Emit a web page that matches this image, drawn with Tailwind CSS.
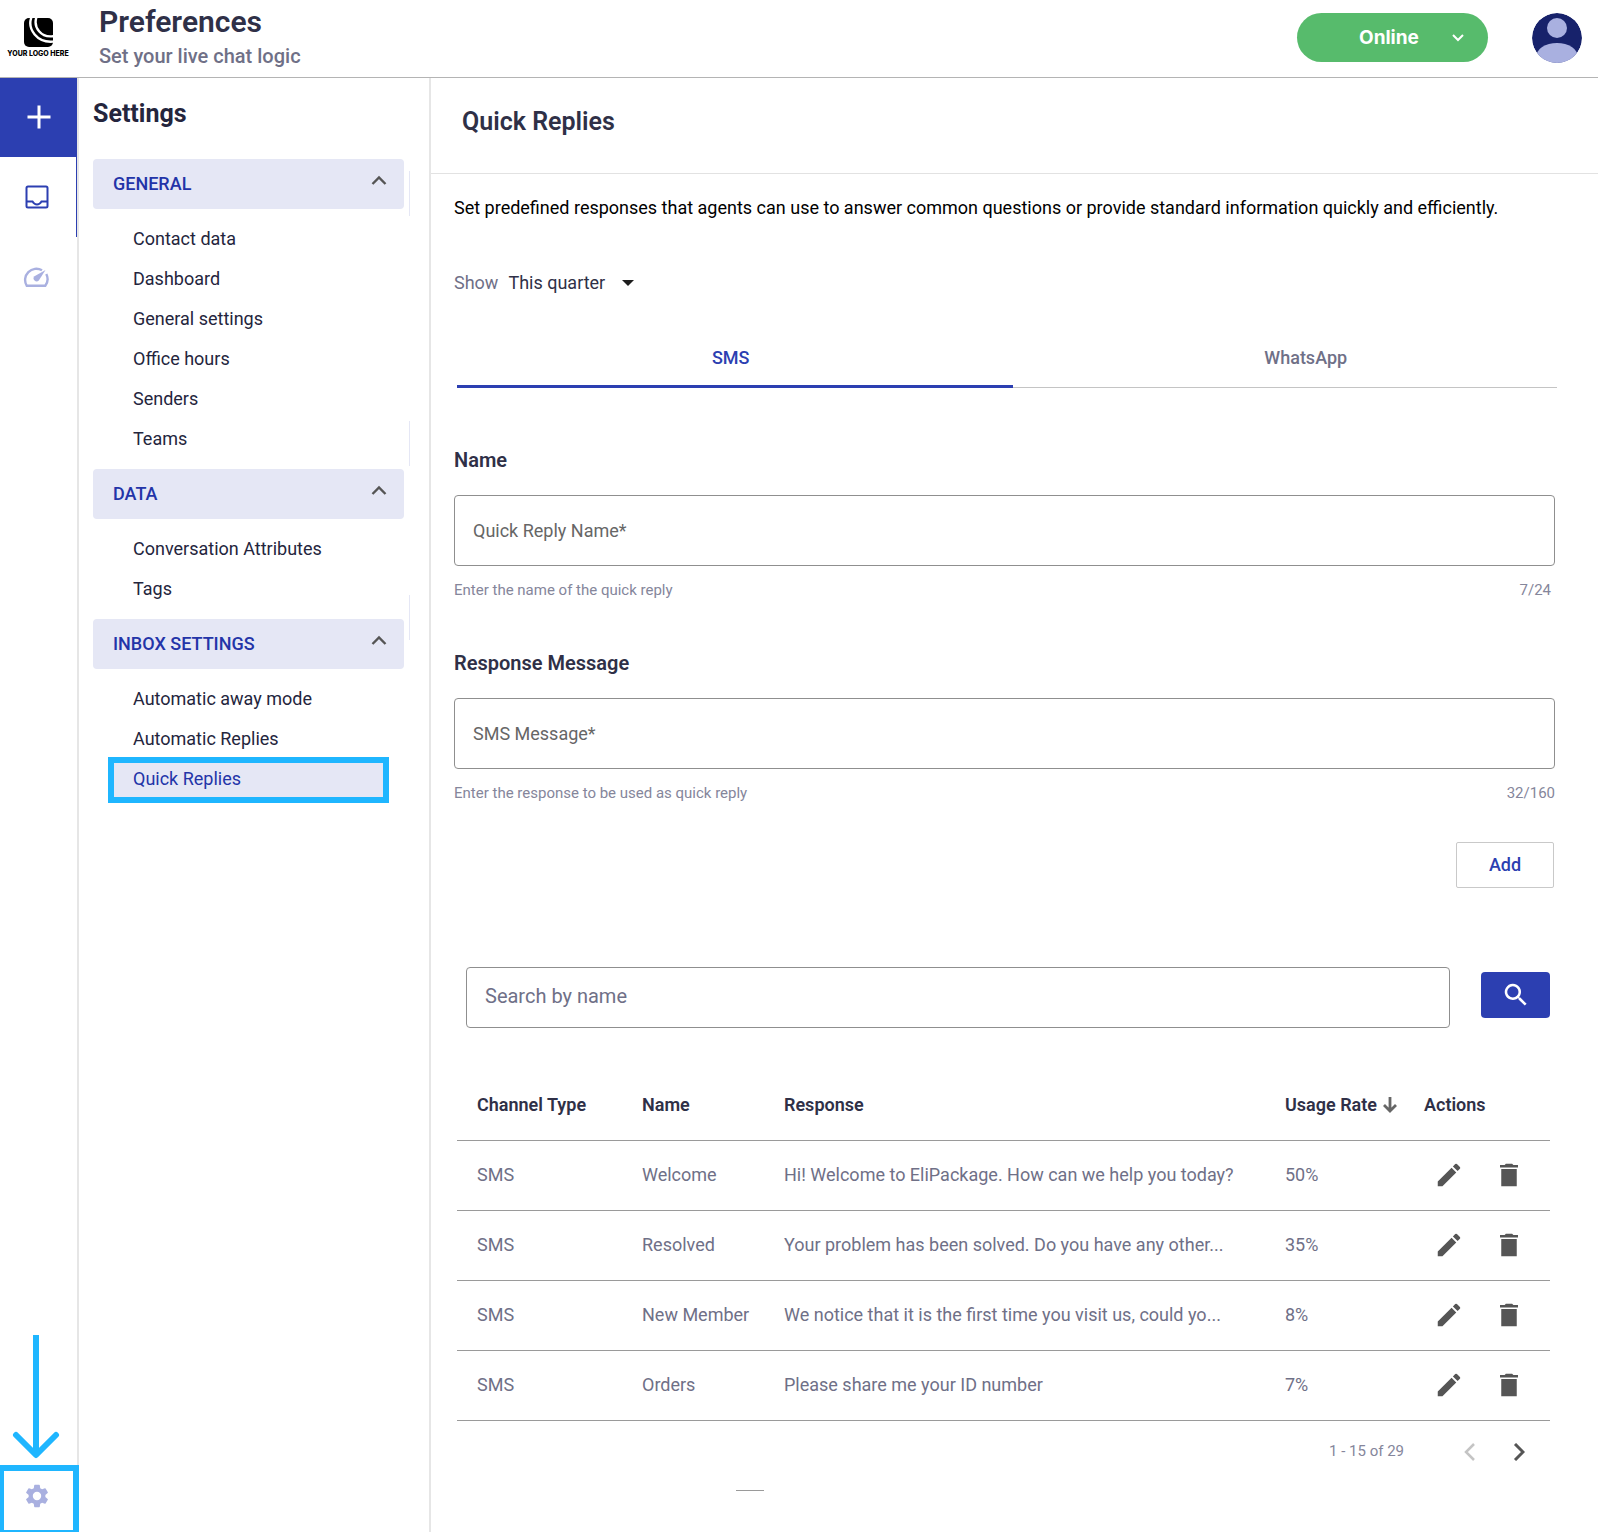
<!DOCTYPE html>
<html lang="en">
<head>
    <meta charset="UTF-8">
    <meta name="viewport" content="width=device-width, initial-scale=1.0">
    <title>Preferences - Quick Replies</title>
    <script src="https://cdn.jsdelivr.net/npm/@tailwindcss/browser@4"></script>
</head>
<body class="min-h-screen flex flex-col bg-white text-[#2f3047] font-[Roboto,sans-serif]">
    <!-- shared icons -->
    <svg class="hidden" aria-hidden="true">
        <symbol id="icon-up" viewBox="0 0 24 24"><path fill="none" stroke="currentColor" stroke-width="2.400" d="M5.500 15l6.500-6.500 6.500 6.500"/></symbol>
        <symbol id="icon-edit" viewBox="0 0 24 24"><path fill="currentColor" d="M3 17.25V21h3.75L17.81 9.94l-3.75-3.75L3 17.25zM20.71 7.04a1 1 0 0 0 0-1.41l-2.34-2.34a1 1 0 0 0-1.41 0l-1.83 1.83 3.75 3.75 1.83-1.83z"/></symbol>
        <symbol id="icon-delete" viewBox="0 0 24 24"><path fill="currentColor" d="M5.800 7.200h12.400V21H5.800zM19.200 4v2H4.800V4h3.700l1-1h5l1 1z"/></symbol>
    </svg>

    <header class="h-[78px] pb-0.5 flex items-center border-b border-[#b4b4b4]">
        <a href="#" class="w-[76px] flex flex-col items-center gap-1" aria-label="Home">
            <svg class="w-[29px] h-[29px]" viewBox="0 0 29 29">
                <rect width="29" height="29" rx="5"/>
                <g fill="none" stroke="#fff" stroke-width="2.400">
                    <path d="M7.500 -1C3 11 13 25.500 30 23.500"/>
                    <path d="M12.500 -1C9 9 17 20.500 30 18"/>
                </g>
            </svg>
            <span class="text-[7px] leading-[6px] font-extrabold text-black whitespace-nowrap font-[Inter,sans-serif]">YOUR LOGO HERE</span>
        </a>
        <div class="flex-grow pl-[23px]">
            <h1 class="text-[30px] leading-9 font-semibold">Preferences</h1>
            <p class="text-[20px] leading-8 font-medium text-[#6f7087]">Set your live chat logic</p>
        </div>
        <div class="relative mr-11">
            <select aria-label="Status" class="appearance-none w-[191px] h-[49px] pt-0.5 pl-[62px] rounded-full bg-[#57bb6c] text-white text-[19px] font-bold font-[Inter,sans-serif]">
                <option>Online</option>
            </select>
            <svg class="absolute right-6 top-[17px] w-3 h-4 text-white pointer-events-none" viewBox="0 0 12 16"><path d="M1 5l5 5 5-5" fill="none" stroke="currentColor" stroke-width="2"/></svg>
        </div>
        <button class="mr-4" aria-label="Account">
            <svg class="w-[50px] h-[50px] rounded-full" viewBox="0 0 50 50">
                <circle cx="25" cy="25" r="25" fill="#17226b"/>
                <circle cx="25" cy="15" r="10" fill="#a9b0e0"/>
                <ellipse cx="25" cy="44" rx="21" ry="14" fill="#a9b0e0"/>
            </svg>
        </button>
    </header>

    <div class="flex-grow flex overflow-hidden">
        <nav class="w-[79px] shrink-0 flex flex-col border-r-2 border-[#e6e6e6]" aria-label="Main">
            <button class="h-[79px] pb-0.5 flex items-center justify-center bg-[#2c3fb1] text-white" aria-label="New">
                <svg class="w-6 h-6" viewBox="0 0 24 24"><path d="M12 .5v23M.5 12h23" stroke="currentColor" stroke-width="3"/></svg>
            </button>
            <a href="#" class="h-20 flex items-center justify-center border-r border-[#2c3fb1] pr-0.5 text-[#2c3fb1]" aria-label="Inbox">
                <svg class="w-6 h-6" viewBox="0 0 24 24" fill="none" stroke="currentColor" stroke-width="2">
                    <rect x="1.500" y="1.500" width="21" height="21" rx="1.500"/>
                    <path d="M2 16.500h5.500c1.200 2 2.600 3 4.500 3s3.300-1 4.500-3H22"/>
                </svg>
            </a>
            <a href="#" class="h-20 flex items-center justify-center pr-1.5 text-[#a9b0e0]" aria-label="Dashboard">
                <svg class="w-[26px] h-[22px]" viewBox="0 0 26 22">
                    <path d="M19 4.300A11.200 11.200 0 0 0 3.700 19.700H22.300A11.200 11.200 0 0 0 23.300 8" fill="none" stroke="currentColor" stroke-width="2.400"/>
                    <path d="M22.500 4L15.800 14.500a3 3 0 1 1-4.300-4.200z" fill="currentColor"/>
                </svg>
            </a>
            <div class="mt-auto flex justify-center pr-1.5 pb-1.5 text-[#1fb6ff]">
                <svg class="w-[48px] h-[124px]" viewBox="0 0 48 124" fill="none" stroke="currentColor" stroke-width="6">
                    <path d="M24 0v118"/>
                    <path d="M4 100l20 20 20-20" stroke-linecap="round" stroke-linejoin="round"/>
                </svg>
            </div>
            <a href="#" class="h-[71px] -ml-0.5 -mr-0.5 -mb-1 flex items-center justify-center border-[6px] border-[#1fb6ff] pr-1 pb-2.5 text-[#a9b0e0]" aria-label="Settings">
                <svg class="w-7 h-7" viewBox="0 0 24 24"><path fill="currentColor" d="M19.140 12.940c.040-.300.060-.610.060-.940s-.020-.640-.070-.940l2.030-1.580a.490.490 0 0 0 .120-.610l-1.920-3.320a.490.490 0 0 0-.590-.220l-2.390.960a7 7 0 0 0-1.620-.940l-.360-2.540a.480.480 0 0 0-.480-.410h-3.840a.470.470 0 0 0-.470.410l-.360 2.540c-.590.240-1.130.570-1.620.940l-2.390-.960a.480.480 0 0 0-.590.220L2.740 8.870a.470.470 0 0 0 .120.610l2.030 1.580c-.050.300-.090.630-.090.940s.020.640.070.940l-2.030 1.580a.490.490 0 0 0-.120.610l1.920 3.320c.120.220.370.290.590.220l2.390-.960c.500.380 1.030.700 1.620.940l.360 2.540c.050.240.240.410.480.410h3.840c.240 0 .440-.170.470-.410l.360-2.540a7 7 0 0 0 1.620-.940l2.390.960c.220.080.470 0 .590-.220l1.920-3.320a.470.470 0 0 0-.120-.610zM12 15.600a3.600 3.600 0 1 1 0-7.200 3.600 3.600 0 0 1 0 7.200z"/></svg>
            </a>
        </nav>

        <aside class="w-[352px] shrink-0 pl-[14px] pr-[25px] border-r-2 border-[#e6e6e6]">
            <h2 class="pt-[18px] pb-[27px] text-[25px] leading-9 font-bold text-[#24253d]">Settings</h2>
            <section class="relative">
                <button class="w-full h-[50px] flex items-center justify-between pl-5 pr-[13px] rounded bg-[#e5e7f5] text-[#2334a8] text-lg font-medium">
                    GENERAL
                    <svg class="w-6 h-6 mb-1.5 text-[#555]"><use href="#icon-up"/></svg>
                </button>
                <span class="absolute -right-1.5 top-3 w-px h-[45px] bg-[#e5e7f5]"></span>
                <ul class="py-2.5 pl-10 text-lg leading-10 text-[#24253d]">
                    <li><a href="#">Contact data</a></li>
                    <li><a href="#">Dashboard</a></li>
                    <li><a href="#">General settings</a></li>
                    <li><a href="#">Office hours</a></li>
                    <li><a href="#">Senders</a></li>
                    <li><a href="#">Teams</a></li>
                </ul>
            </section>
            <section class="relative">
                <button class="w-full h-[50px] flex items-center justify-between pl-5 pr-[13px] rounded bg-[#e5e7f5] text-[#2334a8] text-lg font-medium">
                    DATA
                    <svg class="w-6 h-6 mb-1.5 text-[#555]"><use href="#icon-up"/></svg>
                </button>
                <span class="absolute -right-1.5 -top-12 w-px h-[45px] bg-[#e5e7f5]"></span>
                <ul class="py-2.5 pl-10 text-lg leading-10 text-[#24253d]">
                    <li><a href="#">Conversation Attributes</a></li>
                    <li><a href="#">Tags</a></li>
                </ul>
            </section>
            <section class="relative">
                <button class="w-full h-[50px] flex items-center justify-between pl-5 pr-[13px] rounded bg-[#e5e7f5] text-[#2334a8] text-lg font-medium">
                    INBOX SETTINGS
                    <svg class="w-6 h-6 mb-1.5 text-[#555]"><use href="#icon-up"/></svg>
                </button>
                <span class="absolute -right-1.5 -top-6 w-px h-[45px] bg-[#e5e7f5]"></span>
                <ul class="pt-2.5 pl-10 text-lg leading-10 text-[#24253d]">
                    <li><a href="#">Automatic away mode</a></li>
                    <li><a href="#">Automatic Replies</a></li>
                </ul>
                <a href="#" class="block -mt-0.5 mx-[15px] pl-[19px] h-[46px] border-[6px] border-[#1fb6ff] bg-[#e5e7f5] text-lg leading-8 text-[#2334a8]" aria-current="page">Quick Replies</a>
            </section>
        </aside>

        <main class="flex-grow min-w-0">
            <h2 class="h-[96px] pl-[31px] pt-6 text-[25px] leading-10 font-semibold border-b border-[#e2e2e2]">Quick Replies</h2>
            <div class="pl-[23px] pr-[43px] pt-5">
                <p class="text-lg text-black">Set predefined responses that agents can use to answer common questions or provide standard information quickly and efficiently.</p>

                <div class="mt-[47px] flex items-center gap-2.5 text-lg">
                    <label for="period" class="text-[#6f7087]">Show</label>
                    <div class="relative">
                        <select id="period" class="appearance-none w-32">
                            <option>This quarter</option>
                        </select>
                        <svg class="absolute right-0.5 top-[11px] w-3 h-1.5 pointer-events-none" viewBox="0 0 12 6"><path d="M0 0h12L6 6z" fill="#1d1d1d"/></svg>
                    </div>
                </div>

                <div class="mt-[33px] ml-[3px] -mr-0.5 flex border-b border-[#c4c4c4] text-lg font-medium" role="tablist">
                    <button role="tab" aria-selected="true" class="w-[50.5%] h-[58px] -mb-px pr-2 border-b-3 border-[#2c3fb1] text-[#2c3fb1]">SMS</button>
                    <button role="tab" aria-selected="false" class="flex-grow pl-[42px] pb-0.5 text-[#6f7087]">WhatsApp</button>
                </div>

                <div class="mt-14">
                    <label for="name" class="block text-[20px] leading-8 font-semibold">Name</label>
                    <input id="name" type="text" placeholder="Quick Reply Name*" class="mt-[19px] w-full h-[71px] px-[18px] border border-[#8f8f8f] rounded text-lg placeholder:text-[#666]">
                    <div class="mt-3 pr-1 flex justify-between text-[15px] leading-6 text-[#85869b]">
                        <span>Enter the name of the quick reply</span>
                        <span>7/24</span>
                    </div>
                </div>

                <div class="mt-[45px]">
                    <label for="message" class="block text-[20px] leading-8 font-semibold">Response Message</label>
                    <input id="message" type="text" placeholder="SMS Message*" class="mt-[19px] w-full h-[71px] px-[18px] border border-[#8f8f8f] rounded text-lg placeholder:text-[#666]">
                    <div class="mt-3 flex justify-between text-[15px] leading-6 text-[#85869b]">
                        <span>Enter the response to be used as quick reply</span>
                        <span>32/160</span>
                    </div>
                </div>

                <div class="mt-[37px] mr-px flex justify-end">
                    <button class="w-[98px] h-[46px] border border-[#c9c9c9] rounded-xs text-lg font-medium text-[#2c3fb1]">Add</button>
                </div>

                <div class="mt-[79px] ml-3 mr-[5px] flex items-center gap-[31px]">
                    <input type="search" aria-label="Search by name" placeholder="Search by name" class="flex-grow h-[61px] px-[18px] pb-1 border border-[#8f8f8f] rounded text-[20px] placeholder:text-[#6f7087]">
                    <button class="w-[69px] h-[46px] mb-1.5 flex items-center justify-center rounded bg-[#2c3fb1] text-white" aria-label="Search">
                        <svg class="w-[30px] h-[30px]" viewBox="0 0 24 24"><path fill="currentColor" d="M15.500 14h-.790l-.280-.270A6.500 6.500 0 1 0 13.730 14.430l.270.280v.790l5 4.990L20.490 19zm-6 0a4.500 4.500 0 1 1 0-9 4.500 4.500 0 0 1 0 9z"/></svg>
                    </button>
                </div>

                <div class="ml-[3px] mr-[5px]">
                    <table class="mt-[42px] w-full table-fixed text-left text-lg">
                        <colgroup>
                            <col class="w-[185px]">
                            <col class="w-[142px]">
                            <col>
                            <col class="w-[139px]">
                            <col class="w-[126px]">
                        </colgroup>
                        <thead>
                            <tr class="h-[70px] border-b border-[#9a9a9a]">
                                <th class="pl-5 font-semibold">Channel Type</th>
                                <th class="font-semibold">Name</th>
                                <th class="font-semibold">Response</th>
                                <th class="font-semibold">
                                    <button class="flex items-center gap-1.5">
                                        Usage Rate
                                        <svg class="w-3.5 h-4 text-[#666]" viewBox="0 0 14 16"><path d="M7 0v14M1 8l6 6 6-6" fill="none" stroke="currentColor" stroke-width="2.800"/></svg>
                                    </button>
                                </th>
                                <th class="font-semibold">Actions</th>
                            </tr>
                        </thead>
                        <tbody id="replies" class="text-[#6f7087]"></tbody>
                    </table>

                    <div class="h-[62px] flex items-center justify-end pr-[25px]">
                        <span class="text-[15px] text-[#85869b]">1 - 15 of 29</span>
                        <button class="ml-[60px] text-[#c4c4c4]" aria-label="Previous page" disabled>
                            <svg class="w-3 h-[18px]" viewBox="0 0 12 18"><path d="M10 1L2 9l8 8" fill="none" stroke="currentColor" stroke-width="2.500"/></svg>
                        </button>
                        <button class="ml-[37px] text-[#555]" aria-label="Next page">
                            <svg class="w-3 h-[18px]" viewBox="0 0 12 18"><path d="M2 1l8 8-8 8" fill="none" stroke="currentColor" stroke-width="3"/></svg>
                        </button>
                    </div>
                    <hr class="mt-[7px] ml-[279px] w-7 border-[#9a9a9a]">
                </div>
            </div>
        </main>
    </div>

    <script>
        const replies = [
            { channel: 'SMS', name: 'Welcome', response: 'Hi! Welcome to EliPackage. How can we help you today?', usage: '50%' },
            { channel: 'SMS', name: 'Resolved', response: 'Your problem has been solved. Do you have any other...', usage: '35%' },
            { channel: 'SMS', name: 'New Member', response: 'We notice that it is the first time you visit us, could yo...', usage: '8%' },
            { channel: 'SMS', name: 'Orders', response: 'Please share me your ID number', usage: '7%' },
        ];

        document.getElementById('replies').innerHTML = replies.map((reply) => `
            <tr class="h-[70px] border-b border-[#9a9a9a]">
                <td class="pl-5">${reply.channel}</td>
                <td>${reply.name}</td>
                <td>${reply.response}</td>
                <td>${reply.usage}</td>
                <td>
                    <div class="flex items-center gap-[30px] pl-2.5 text-[#555]">
                        <button aria-label="Edit ${reply.name}"><svg class="block w-[30px] h-[30px]"><use href="#icon-edit"/></svg></button>
                        <button aria-label="Delete ${reply.name}"><svg class="block w-[30px] h-[30px]"><use href="#icon-delete"/></svg></button>
                    </div>
                </td>
            </tr>
        `).join('');
    </script>
</body>
</html>
